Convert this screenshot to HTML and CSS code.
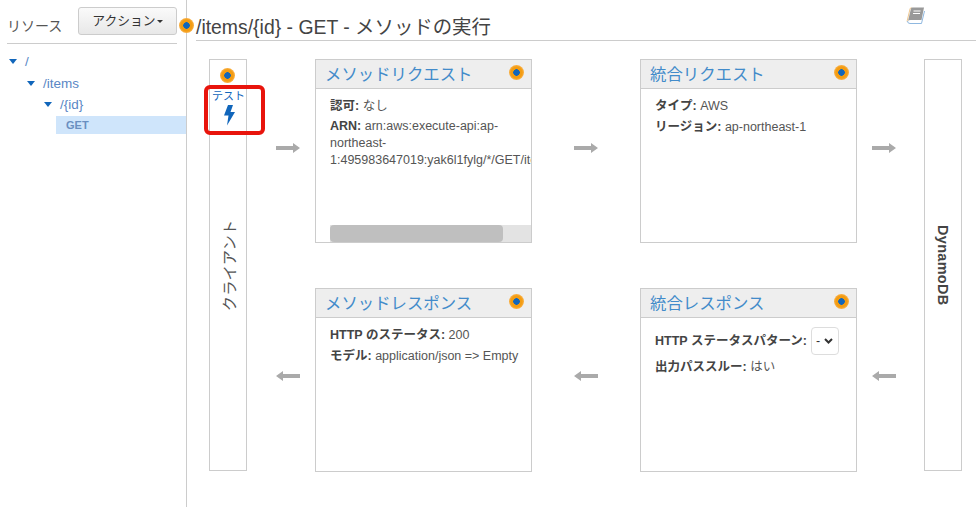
FILE: index.html
```html
<!DOCTYPE html>
<html lang="ja">
<head>
<meta charset="utf-8">
<title>GET - メソッドの実行</title>
<link rel="stylesheet" href="styles.css">
</head>
<body>
<div class="app">
  <aside class="sidebar">
    <div class="side-head">
      <span class="side-title">リソース</span>
      <button class="action-btn">アクション<i class="caret"></i></button>
    </div>
    <ul class="tree">
      <li class="lvl0"><i class="tri"></i><a>/</a></li>
      <li class="lvl1"><i class="tri"></i><a>/items</a></li>
      <li class="lvl2"><i class="tri"></i><a>/{id}</a></li>
      <li class="method">GET</li>
    </ul>
  </aside>
  <main class="main">
    <span class="dot title-dot"></span>
    <header class="page-head">
      <h1 class="page-title">/items/{id} - GET - メソッドの実行</h1>
      <svg class="book" width="20" height="18" viewBox="0 0 20 18">
        <path d="M1 14.500 L4 2 Q4.300 .8 5.500 .5" fill="none" stroke="#f0c890" stroke-width="1"/>
        <path d="M2 14 L5 1.500 Q5.300 .5 6.500 .5 L18 .5 L15.500 13 L4.500 13 Q2.500 13 2 14Z" fill="#999"/>
        <path d="M7.500 4 H14.500 M7 6.500 H14" stroke="#fff" stroke-width="1.200"/>
        <path d="M1.500 14 Q1.500 16.500 4 16.500 L15.500 16.500 L18.500 4" fill="none" stroke="#8fb8e0" stroke-width="1"/>
      </svg>
    </header>
    <div class="diagram">
      <div class="side-col client">
        <span class="dot client-dot"></span>
        <div class="test">
          <span class="test-label">テスト</span>
          <svg class="bolt" width="14" height="22" viewBox="0 0 14 22"><path d="M6 1 L11 1 L8.500 8 L13 8 L5 21.500 L6.500 11.500 L2 11.500Z" fill="#1166bb"/></svg>
        </div>
        <span class="vert client-label">クライアント</span>
      </div>
      <div class="arrow arrow-first arrow-top"><svg width="26" height="12" viewBox="0 0 26 12"><path d="M1 4 H18 V1 L25 6 L18 11 V8 H1Z" fill="#aaa"/></svg></div>
      <section class="card">
        <div class="card-head"><h2>メソッドリクエスト</h2><span class="dot"></span></div>
        <div class="card-body">
          <p class="tight"><b>認可:</b> なし</p>
          <p class="arn"><b>ARN:</b> arn:aws:execute-api:ap-northeast-1:495983647019:yak6l1fylg/*/GET/items/*</p>
          <div class="scrollbar"><div class="thumb"></div></div>
        </div>
      </section>
      <div class="arrow arrow-top"><svg width="26" height="12" viewBox="0 0 26 12"><path d="M1 4 H18 V1 L25 6 L18 11 V8 H1Z" fill="#aaa"/></svg></div>
      <section class="card">
        <div class="card-head"><h2>統合リクエスト</h2><span class="dot"></span></div>
        <div class="card-body">
          <p><b>タイプ:</b> AWS</p>
          <p><b>リージョン:</b> ap-northeast-1</p>
        </div>
      </section>
      <div class="arrow arrow-last arrow-top"><svg width="26" height="12" viewBox="0 0 26 12"><path d="M1 4 H18 V1 L25 6 L18 11 V8 H1Z" fill="#aaa"/></svg></div>
      <div class="side-col db"><span class="vert db-label">DynamoDB</span></div>

      <div class="arrow arrow-first arrow-bottom"><svg width="26" height="12" viewBox="0 0 26 12"><path d="M25 4 H8 V1 L1 6 L8 11 V8 H25Z" fill="#aaa"/></svg></div>
      <section class="card">
        <div class="card-head"><h2>メソッドレスポンス</h2><span class="dot"></span></div>
        <div class="card-body">
          <p><b>HTTP のステータス:</b> 200</p>
          <p><b>モデル:</b> application/json =&gt; Empty</p>
        </div>
      </section>
      <div class="arrow arrow-bottom"><svg width="26" height="12" viewBox="0 0 26 12"><path d="M25 4 H8 V1 L1 6 L8 11 V8 H25Z" fill="#aaa"/></svg></div>
      <section class="card">
        <div class="card-head"><h2>統合レスポンス</h2><span class="dot"></span></div>
        <div class="card-body">
          <p class="with-select"><b>HTTP ステータスパターン:</b>
            <span class="select">-<svg width="9" height="6" viewBox="0 0 9 6"><path d="M1 1 L4.500 4.500 L8 1" fill="none" stroke="#333" stroke-width="2"/></svg></span></p>
          <p><b>出力パススルー:</b> はい</p>
        </div>
      </section>
      <div class="arrow arrow-last arrow-bottom"><svg width="26" height="12" viewBox="0 0 26 12"><path d="M25 4 H8 V1 L1 6 L8 11 V8 H25Z" fill="#aaa"/></svg></div>
    </div>
  </main>
</div>
</body>
</html>
```
FILE: styles.css
```css
* { box-sizing: border-box; }
html, body { margin: 0; padding: 0; height: 100%; }
body {
  background: #fff;
  color: #555;
  font-family: "Liberation Sans", "Noto Sans CJK JP", sans-serif;
  font-size: 12.500px;
  overflow: hidden;
}
.app { display: flex; height: 507px; }

.sidebar {
  width: 187px;
  flex: none;
  padding-top: 8px;
  border-right: 1px solid #ccc;
}
.side-head {
  display: flex;
  justify-content: space-between;
  align-items: flex-end;
  margin-left: 7px;
  width: 170px;
  height: 36px;
  padding-bottom: 7px;
  border-bottom: 1px solid #ccc;
}
.side-title { font-size: 14px; line-height: 20px; color: #555; }
.action-btn {
  width: 99px;
  height: 28px;
  margin-bottom: 1px;
  padding: 0 0 4px;
  border: 1px solid #ccc;
  border-radius: 3px;
  background: linear-gradient(#fafafa, #e8e8e8);
  color: #333;
  font: 12.800px "Liberation Sans", "Noto Sans CJK JP", sans-serif;
}
.caret {
  display: inline-block;
  margin-left: 1px;
  vertical-align: middle;
  border-top: 3px solid #333;
  border-left: 3px solid transparent;
  border-right: 3px solid transparent;
}
.tree { list-style: none; margin: 7px 0 0; padding: 0; }
.tree li { display: flex; align-items: center; height: 21.500px; color: #5a87c5; font-size: 13.500px; }
.tree a { color: #5a87c5; }
.tri {
  width: 0;
  height: 0;
  margin-right: 8px;
  border-top: 5px solid #1166bb;
  border-left: 4px solid transparent;
  border-right: 4px solid transparent;
}
.lvl0 { padding-left: 9px; }
.lvl1 { padding-left: 27px; }
.lvl2 { padding-left: 44px; }
.tree .method {
  height: 18px;
  margin-top: .500px;
  margin-left: 56px;
  padding-left: 10px;
  background: #cfe5fb;
  color: #6a8fc0;
  font-size: 11px;
  font-weight: bold;
}

.main { position: relative; flex: 1; min-width: 0; }
.page-head {
  display: flex;
  justify-content: space-between;
  height: 41px;
  margin-left: 9px;
  border-bottom: 1px solid #ccc;
}
.page-title {
  margin: 15px 0 0;
  font-size: 19.400px;
  line-height: 24px;
  font-weight: normal;
  color: #444;
}
.book { margin: 7px 50px 0 0; }

.dot {
  display: block;
  flex: none;
  width: 15px;
  height: 15px;
  border-radius: 50%;
  background: radial-gradient(circle, #1166bb 0 3px, #f39c12 3.500px 5.500px, #f9b24a 7.500px);
}
.title-dot { position: absolute; left: -8px; top: 18px; }

.diagram {
  display: grid;
  grid-template-columns: 38px 68px 217px 108px 217px 67px 38px;
  grid-template-rows: 184px 184px;
  row-gap: 45px;
  margin: 18px 0 0 22px;
}
.side-col {
  position: relative;
  grid-row: 1 / span 2;
  height: 412px;
  border: 1px solid #ccc;
  display: flex;
  align-items: center;
  justify-content: center;
}
.client { grid-column: 1; }
.db { grid-column: 7; }
.arrow { display: flex; align-items: center; justify-content: center; }
.arrow svg { display: block; }
.arrow-first { padding-left: 13px; }
.arrow-last { padding-right: 14px; }
.arrow-top { padding-bottom: 6px; }
.arrow-bottom { padding-bottom: 8px; }
.client-dot { position: absolute; left: 10px; top: 8px; }
.test {
  position: absolute;
  z-index: 1;
  left: -6px;
  top: 25px;
  width: 61px;
  height: 50px;
  padding-right: 12px;
  border: 4px solid #e8140c;
  border-radius: 6px;
  background: transparent;
  text-align: center;
}
.test-label {
  display: block;
  margin-top: 1px;
  color: #1166bb;
  font-size: 11px;
  font-weight: normal;
  line-height: 13px;
  white-space: nowrap;
}
.bolt { display: block; margin: 1px auto 0; }
.vert { writing-mode: vertical-rl; white-space: nowrap; }
.client-label {
  font-size: 15.300px;
  color: #555;
  margin-top: 2px;
  text-orientation: sideways;
  transform: rotate(180deg);
}
.db-label { font-size: 14.500px; font-weight: bold; color: #444; margin-top: 0; letter-spacing: .3px; }

.card {
  display: flex;
  flex-direction: column;
  border: 1px solid #ccc;
  min-width: 0;
  overflow: hidden;
}
.card-head {
  display: flex;
  align-items: center;
  justify-content: space-between;
  flex: none;
  height: 29px;
  padding: 0 7px 0 9px;
  background: #eee;
  border-bottom: 1px solid #ccc;
}
.card-head h2 {
  margin: 0;
  font-size: 16.400px;
  line-height: 24px;
  font-weight: normal;
  white-space: nowrap;
  color: #428bca;
}
.card-head .dot { margin-top: -3px; }
.card-body {
  position: relative;
  flex: 1;
  padding: 9px 0 0 14px;
  overflow: hidden;
  line-height: 17px;
}
.card-body p { margin: 0 0 4px; white-space: nowrap; }
.card-body .tight { margin-bottom: 3px; }
.card-body b { color: #444; }
.card-body .arn { white-space: normal; width: 186px; overflow-wrap: normal; }
.scrollbar {
  position: absolute;
  left: 14px;
  right: 0;
  bottom: 0;
  height: 17px;
  background: #e3e3e3;
}
.thumb { width: 173px; height: 100%; background: #bfbfbf; border-radius: 4px; }
.with-select { display: flex; align-items: center; gap: 4px; }
.select {
  display: inline-flex;
  align-items: center;
  gap: 4px;
  width: 28px;
  height: 28px;
  padding-left: 4px;
  border: 1px solid #ddd;
  border-radius: 4px;
  color: #333;
  background: #fff;
}
```
